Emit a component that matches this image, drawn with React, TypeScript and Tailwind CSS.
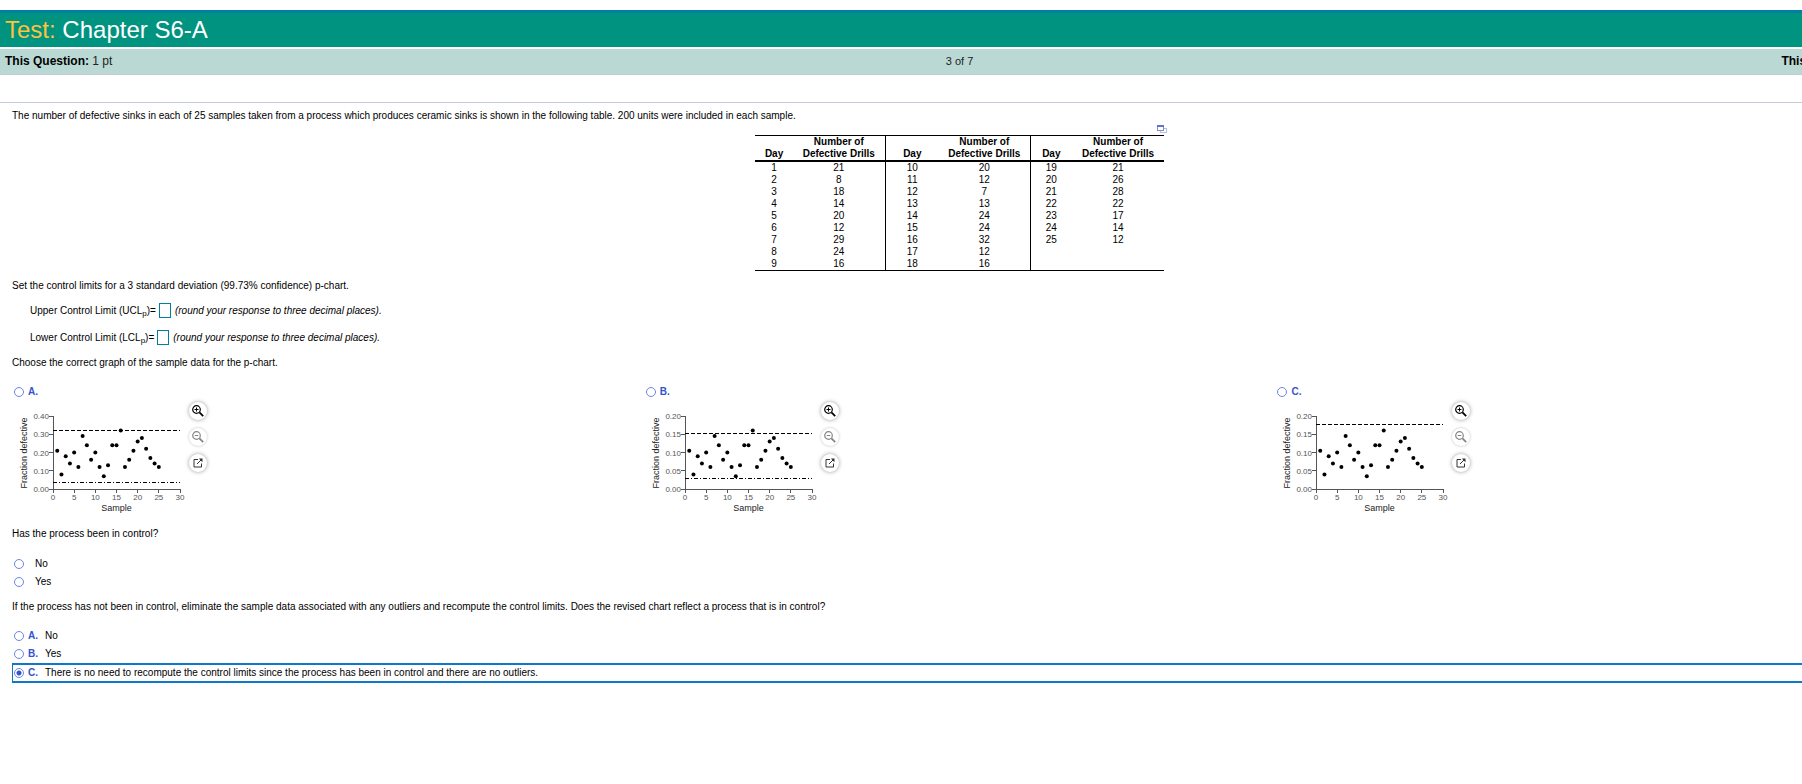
import { useState } from "react";

const defects = [
  21, 8, 18, 14, 20, 12, 29, 24, 16, 20, 12, 7, 13, 24, 24, 32, 12, 16, 21, 26,
  28, 22, 17, 14, 12,
];

type ChartSpec = {
  letter: string;
  unitsPerSample: number;
  max: number;
  ucl: number;
  lcl?: number;
};

const charts: ChartSpec[] = [
  { letter: "A", unitsPerSample: 100, max: 0.4, ucl: 0.32, lcl: 0.033 },
  { letter: "B", unitsPerSample: 200, max: 0.2, ucl: 0.153, lcl: 0.03 },
  { letter: "C", unitsPerSample: 200, max: 0.2, ucl: 0.178 },
];

const revisedOptions = [
  { letter: "A", text: "No" },
  { letter: "B", text: "Yes" },
  {
    letter: "C",
    text: "There is no need to recompute the control limits since the process has been in control and there are no outliers.",
  },
];

const radioClass =
  "size-[10px] shrink-0 appearance-none rounded-full border border-[#6d86e0] bg-white checked:bg-[radial-gradient(circle,#3353cf_0_2px,#ffffff_3px)]";

const AXIS_X = 41;
const AXIS_W = 127;
const AXIS_TOP = 14;
const AXIS_H = 73;
const AXIS_BOTTOM = AXIS_TOP + AXIS_H;

function ControlChart({ spec }: { spec: ChartSpec }) {
  const px = (day: number) => AXIS_X + (day / 30) * AXIS_W;
  const py = (v: number) => AXIS_BOTTOM - (v / spec.max) * AXIS_H;
  const yTicks = [0, 1, 2, 3, 4].map((i) => (spec.max * i) / 4);
  const xTicks = [0, 5, 10, 15, 20, 25, 30];

  return (
    <svg
      width="177"
      height="112"
      role="img"
      aria-label={`p-chart ${spec.letter}`}
      className="shrink-0"
    >
      <g stroke="#555" strokeWidth="1" shapeRendering="crispEdges">
        <line x1={AXIS_X} y1={AXIS_TOP} x2={AXIS_X} y2={AXIS_BOTTOM} />
        <line
          x1={AXIS_X}
          y1={AXIS_BOTTOM}
          x2={AXIS_X + AXIS_W}
          y2={AXIS_BOTTOM}
        />
        {yTicks.map((t) => (
          <line key={t} x1={AXIS_X - 4} y1={py(t)} x2={AXIS_X} y2={py(t)} />
        ))}
        {xTicks.map((t) => (
          <line
            key={t}
            x1={px(t)}
            y1={AXIS_BOTTOM}
            x2={px(t)}
            y2={AXIS_BOTTOM + 4}
          />
        ))}
      </g>
      <g fontSize="8" fill="#555">
        {yTicks.map((t) => (
          <text key={t} x={AXIS_X - 4} y={py(t) + 3} textAnchor="end">
            {t.toFixed(2)}
          </text>
        ))}
        {xTicks.map((t) => (
          <text key={t} x={px(t)} y={AXIS_BOTTOM + 11} textAnchor="middle">
            {t}
          </text>
        ))}
      </g>
      <g fontSize="9" fill="#222" textAnchor="middle">
        <text x={AXIS_X + AXIS_W / 2} y="109">
          Sample
        </text>
        <text transform="translate(15 51) rotate(-90)">
          Fraction defective
        </text>
      </g>
      <g stroke="#000" strokeWidth="1" shapeRendering="crispEdges">
        <line
          x1={AXIS_X}
          y1={py(spec.ucl)}
          x2={AXIS_X + AXIS_W}
          y2={py(spec.ucl)}
          strokeDasharray="4 2"
        />
        {spec.lcl !== undefined && (
          <line
            x1={AXIS_X}
            y1={py(spec.lcl)}
            x2={AXIS_X + AXIS_W}
            y2={py(spec.lcl)}
            strokeDasharray="4 2 1 2"
          />
        )}
      </g>
      {defects.map((d, i) => (
        <circle key={i} cx={px(i + 1)} cy={py(d / spec.unitsPerSample)} r="2" />
      ))}
    </svg>
  );
}

function Magnifier({ sign }: { sign: "in" | "out" }) {
  return (
    <svg
      width="12"
      height="12"
      viewBox="0 0 12 12"
      fill="none"
      stroke="currentColor"
    >
      <circle cx="4.5" cy="4.5" r="3.8" strokeWidth="1.2" />
      <path d="M7.4 7.4 11.2 11.2" strokeWidth="1.8" />
      <path d={sign === "in" ? "M2.5 4.5h4M4.5 2.5v4" : "M2.7 4.5h3.6"} />
    </svg>
  );
}

function ChartTools() {
  const base =
    "flex size-[18px] items-center justify-center rounded-full bg-white";
  return (
    <div className="flex flex-col gap-2">
      <button
        aria-label="Zoom in"
        className={`${base} text-black shadow-[0_0_4px_rgba(0,0,0,0.4)]`}
      >
        <Magnifier sign="in" />
      </button>
      <button
        aria-label="Zoom out"
        className={`${base} text-[#858585] shadow-[0_0_3px_rgba(0,0,0,0.25)]`}
      >
        <Magnifier sign="out" />
      </button>
      <button
        aria-label="Open in new window"
        className={`${base} text-[#333] shadow-[0_0_4px_rgba(0,0,0,0.4)]`}
      >
        <svg
          width="10"
          height="10"
          viewBox="0 0 10 10"
          fill="none"
          stroke="currentColor"
        >
          <path d="M5 1.5H1v7.5h7.5V5.5M4 6 8 2" />
          <path d="M5.8 0.5h3.7v3.7z" fill="currentColor" stroke="none" />
        </svg>
      </button>
    </div>
  );
}

function SampleTable() {
  const rows = Array.from({ length: 9 }, (_, r) => [r, r + 9, r + 18]);
  const divider = "border-r border-black";
  return (
    <table className="w-[409px] table-fixed border-collapse border-b border-t border-black text-center">
      <colgroup>
        <col className="w-[38px]" />
        <col className="w-[92px]" />
        <col className="w-[54px]" />
        <col className="w-[91px]" />
        <col className="w-[42px]" />
        <col className="w-[92px]" />
      </colgroup>
      <thead>
        <tr className="border-b-2 border-black align-bottom">
          {[0, 1, 2].map((g) => [
            <th key={`day${g}`} className="font-bold">
              Day
            </th>,
            <th key={`num${g}`} className={`font-bold ${g < 2 ? divider : ""}`}>
              Number of
              <br />
              Defective Drills
            </th>,
          ])}
        </tr>
      </thead>
      <tbody>
        {rows.map((row) => (
          <tr key={row[0]} className="h-[12px]">
            {row.map((i, g) => [
              <td key={`day${g}`}>{i < defects.length ? i + 1 : ""}</td>,
              <td key={`num${g}`} className={g < 2 ? divider : ""}>
                {defects[i] ?? ""}
              </td>,
            ])}
          </tr>
        ))}
      </tbody>
    </table>
  );
}

function LimitField({ name, abbr }: { name: string; abbr: string }) {
  return (
    <label className="flex h-[15px] items-center whitespace-pre">
      <span>
        {name} Control Limit ({abbr}
        <sub className="text-[8px] leading-none">p</sub>)=
      </span>
      <input
        type="text"
        className="ml-[3px] mr-1 h-[15px] w-[12px] border border-[#007fa3] bg-white"
      />
      <i>(round your response to three decimal places).</i>
    </label>
  );
}

export default function App() {
  const [graph, setGraph] = useState("");
  const [inControl, setInControl] = useState("");
  const [revised, setRevised] = useState("C");

  return (
    <div className="overflow-hidden bg-white font-['Liberation_Sans',Arial,sans-serif] text-[10px] leading-[12px] text-black">
      {/* The page runs a little wider than the window */}
      <div className="w-[106.5%]">
        <header className="pt-[10px]">
          <div className="border-t-[3px] border-[#007fa3] bg-[#009380] px-[5px]">
            <h1 className="text-[24px] leading-[34px] text-white">
              <span className="text-[#fcc33c]">Test:</span> Chapter S6-A
            </h1>
          </div>
          <div className="mt-px border-t border-white" />
          <div className="grid h-[26px] grid-cols-3 items-center border-b border-[#c3cbdb] bg-[#bad9d4] px-[5px] pb-[2px] text-[12px] text-[#222]">
            <span>
              <b className="text-black">This Question:</b> 1 pt
            </span>
            <span className="text-center text-[11px]">3 of 7</span>
            <b className="pr-[108px] text-right text-black">This</b>
          </div>
          <div className="h-7 border-b border-[#c3cbdb]" />
        </header>

        <main className="px-3 pt-[7px]">
          <p>
            The number of defective sinks in each of 25 samples taken from a
            process which produces ceramic sinks is shown in the following
            table. 200 units were included in each sample.
          </p>

          <div className="mx-auto mt-[3px] w-[409px]">
            <div className="-mr-[3px] mb-[2px] flex h-[8px] justify-end">
              <button aria-label="Open table data">
                <svg width="10" height="8" viewBox="0 0 10 8" fill="none">
                  <rect x="3.5" y="3.5" width="6" height="4" fill="#fff" stroke="#b9c2e6" />
                  <rect x="0.5" y="0.5" width="6" height="5" fill="#fff" stroke="#8190cf" />
                  <path d="M0 1h7" stroke="#6075c4" strokeWidth="2" />
                </svg>
              </button>
            </div>
            <SampleTable />
          </div>

          <p className="mt-[9px]">
            Set the control limits for a 3 standard deviation (99.73%
            confidence) p-chart.
          </p>
          <div className="mt-[11px] ml-[18px] flex flex-col gap-3">
            <LimitField name="Upper" abbr="UCL" />
            <LimitField name="Lower" abbr="LCL" />
          </div>

          <p className="mt-3">
            Choose the correct graph of the sample data for the p-chart.
          </p>
          <div className="mt-[17px] grid grid-cols-3">
            {charts.map((c) => (
              <div key={c.letter}>
                <label className="flex items-center pl-[2px] font-bold text-[#3353cf]">
                  <input
                    type="radio"
                    name="graph"
                    className={radioClass}
                    checked={graph === c.letter}
                    onChange={() => setGraph(c.letter)}
                  />
                  <span className="ml-1">{c.letter}.</span>
                </label>
                <div className="mt-1 flex">
                  <ControlChart spec={c} />
                  <ChartTools />
                </div>
              </div>
            ))}
          </div>

          <p className="mt-[14px]">Has the process been in control?</p>
          <div className="mt-[15px]">
            {["No", "Yes"].map((o) => (
              <label key={o} className="flex h-[18px] items-center pl-[2px]">
                <input
                  type="radio"
                  name="in-control"
                  className={radioClass}
                  checked={inControl === o}
                  onChange={() => setInControl(o)}
                />
                <span className="ml-[11px]">{o}</span>
              </label>
            ))}
          </div>

          <p className="mt-[10px]">
            If the process has not been in control, eliminate the sample data
            associated with any outliers and recompute the control limits. Does
            the revised chart reflect a process that is in control?
          </p>
          <div className="mt-[14px]">
            {revisedOptions.map((o) => (
              <label
                key={o.letter}
                className={`flex items-center ${
                  revised === o.letter
                    ? "h-5 border-y-2 border-x border-[#0f78c8] pl-px"
                    : "h-[18px] pl-[2px]"
                }`}
              >
                <input
                  type="radio"
                  name="revised"
                  className={radioClass}
                  checked={revised === o.letter}
                  onChange={() => setRevised(o.letter)}
                />
                <span className="ml-1 w-[17px] font-bold text-[#3353cf]">
                  {o.letter}.
                </span>
                <span>{o.text}</span>
              </label>
            ))}
          </div>
        </main>
      </div>
    </div>
  );
}
